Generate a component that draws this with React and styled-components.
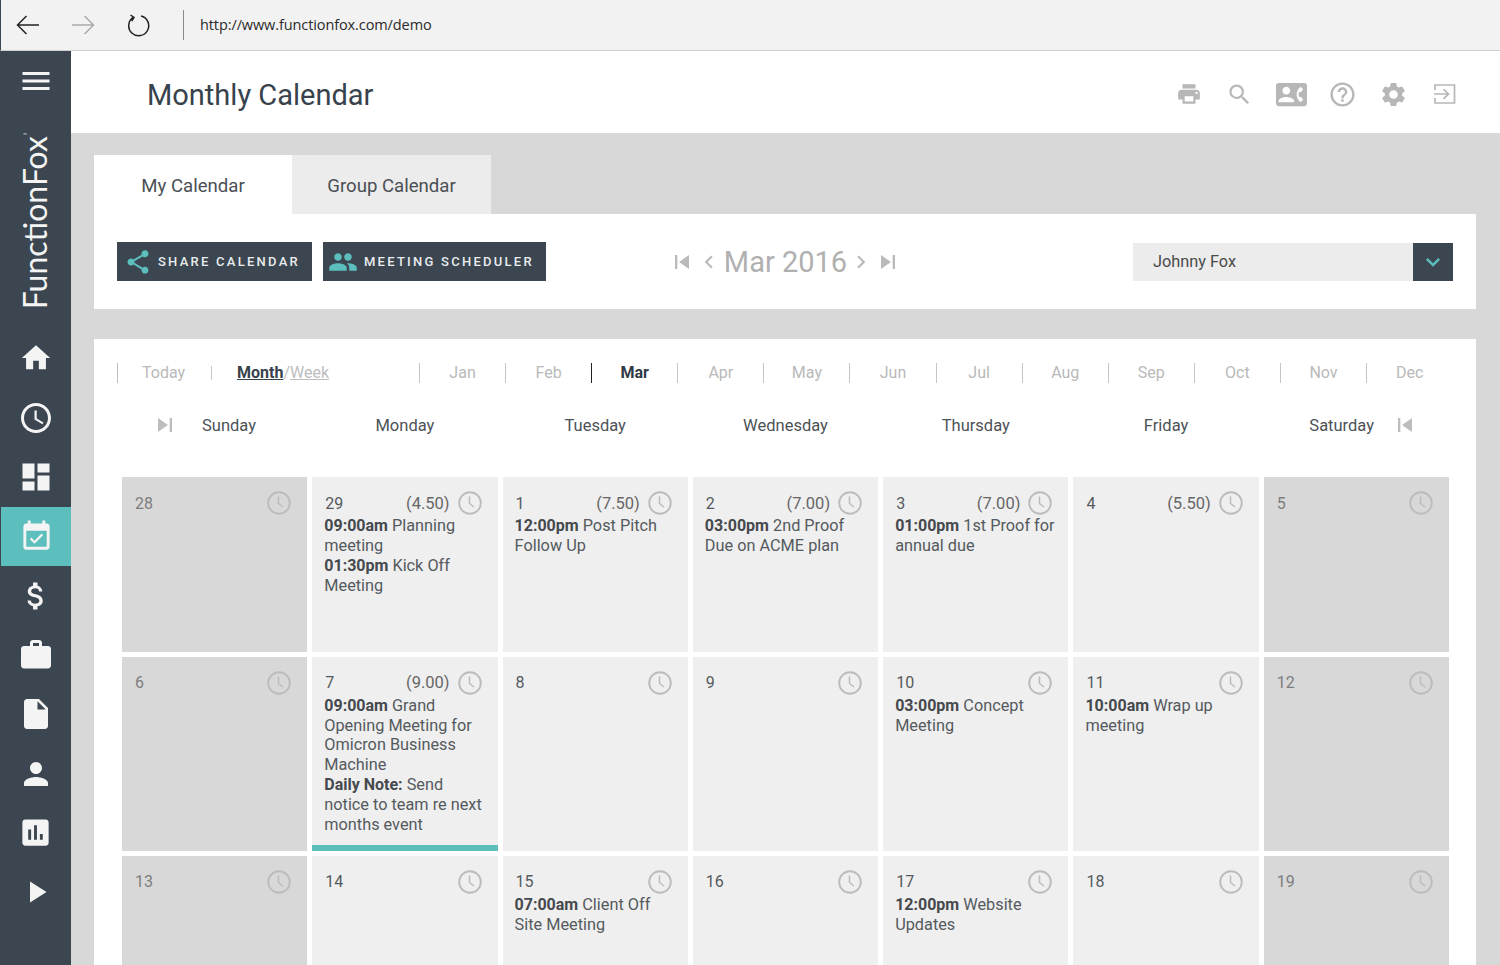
import React from "react";
import styled, { createGlobalStyle } from "styled-components";
import {
  MdAccessTime,
  MdAssessment,
  MdAttachMoney,
  MdChevronLeft,
  MdChevronRight,
  MdContactPhone,
  MdDashboard,
  MdEventAvailable,
  MdHelpOutline,
  MdHome,
  MdInsertDriveFile,
  MdKeyboardArrowDown,
  MdMenu,
  MdPeople,
  MdPerson,
  MdPlayArrow,
  MdPrint,
  MdSearch,
  MdSettings,
  MdShare,
  MdSkipNext,
  MdSkipPrevious,
  MdWork,
} from "react-icons/md";

const GlobalStyle = createGlobalStyle`
  html, body {
    margin: 0;
    padding: 0;
    height: 965px;
    overflow: hidden;
    background: #d8d8d8;
    font-family: Roboto, "Liberation Sans", sans-serif;
  }
  * { box-sizing: border-box; }
`;

const navItems = [
  { Icon: MdHome, size: 34 },
  { Icon: MdAccessTime, size: 36 },
  { Icon: MdDashboard, size: 36 },
  { Icon: MdEventAvailable, size: 35, active: true },
  { Icon: MdAttachMoney, size: 36 },
  { Icon: MdWork, size: 36 },
  { Icon: MdInsertDriveFile, size: 36 },
  { Icon: MdPerson, size: 36 },
  { Icon: MdAssessment, size: 35 },
  { Icon: MdPlayArrow, size: 36 },
];

const months = ["Jan", "Feb", "Mar", "Apr", "May", "Jun", "Jul", "Aug", "Sep", "Oct", "Nov", "Dec"];
const weekdays = ["Monday", "Tuesday", "Wednesday", "Thursday", "Friday"];

const days = [
  { n: 28, off: true },
  {
    n: 29,
    hours: "4.50",
    items: [
      ["09:00am", "Planning meeting"],
      ["01:30pm", "Kick Off Meeting"],
    ],
  },
  { n: 1, hours: "7.50", items: [["12:00pm", "Post Pitch Follow Up"]] },
  { n: 2, hours: "7.00", items: [["03:00pm", "2nd Proof Due on ACME plan"]] },
  { n: 3, hours: "7.00", items: [["01:00pm", "1st Proof for annual due"]] },
  { n: 4, hours: "5.50" },
  { n: 5, off: true },
  { n: 6, off: true },
  {
    n: 7,
    hours: "9.00",
    marked: true,
    items: [
      ["09:00am", "Grand Opening Meeting for Omicron Business Machine"],
      ["Daily Note:", "Send notice to team re next months event"],
    ],
  },
  { n: 8 },
  { n: 9 },
  { n: 10, items: [["03:00pm", "Concept Meeting"]] },
  { n: 11, items: [["10:00am", "Wrap up meeting"]] },
  { n: 12, off: true },
  { n: 13, off: true },
  { n: 14 },
  { n: 15, items: [["07:00am", "Client Off Site Meeting"]] },
  { n: 16 },
  { n: 17, items: [["12:00pm", "Website Updates"]] },
  { n: 18 },
  { n: 19, off: true },
];

const ClockIcon = () => (
  <svg width="24" height="24" viewBox="0 0 24 24" fill="none" stroke="#bcbcbc" strokeWidth="1.9">
    <circle cx="12" cy="12" r="10.8" />
    <path d="M11.5 5.5V12.5L16 16" strokeWidth="1.5" />
  </svg>
);

const LogoutIcon = () => (
  <svg width="22" height="20" viewBox="0 0 22 20" fill="none" stroke="#b7b7b7" strokeWidth="1.7">
    <path d="M1 6V1H20.5V19H1V14" />
    <path d="M0 10H14M9.5 5.2L14.5 10L9.5 14.8" />
  </svg>
);

const App = () => (
  <Page>
    <GlobalStyle />
    <BrowserBar>
      <BrowserBtn>
        <svg width="24" height="20" viewBox="0 0 24 20" fill="none" stroke="#222" strokeWidth="1.5">
          <path d="M23 10H1.5M10.5 1L1.5 10L10.5 19" />
        </svg>
      </BrowserBtn>
      <BrowserBtn>
        <svg width="24" height="20" viewBox="0 0 24 20" fill="none" stroke="#aaa" strokeWidth="1.5">
          <path d="M1 10H22.5M13.5 1L22.5 10L13.5 19" />
        </svg>
      </BrowserBtn>
      <BrowserBtn>
        <svg width="24" height="24" viewBox="0 0 24 24" fill="none" stroke="#222" strokeWidth="1.5">
          <path d="M7.5 4.2A10 10 0 1 0 15 3M4.5 2L8 4.4L5.8 8" />
        </svg>
      </BrowserBtn>
      <UrlDivider />
      <Url>http://www.functionfox.com/demo</Url>
    </BrowserBar>
    <Body>
      <Sidebar>
        <MenuBtn>
          <MdMenu size={36} />
        </MenuBtn>
        <Logo>
          <LogoText>
            FunctionFox<LogoMark>™</LogoMark>
          </LogoText>
        </Logo>
        <NavList>
          {navItems.map(({ Icon, size, active }, i) => (
            <NavItem key={i} $active={active}>
              <Icon size={size} />
            </NavItem>
          ))}
        </NavList>
      </Sidebar>
      <Main>
        <Header>
          <Title>Monthly Calendar</Title>
          <HeaderIcons>
            <HeaderIcon><MdPrint size={26} /></HeaderIcon>
            <HeaderIcon><MdSearch size={27} /></HeaderIcon>
            <HeaderIcon><MdContactPhone size={31} /></HeaderIcon>
            <HeaderIcon><MdHelpOutline size={29} /></HeaderIcon>
            <HeaderIcon><MdSettings size={29} /></HeaderIcon>
            <HeaderIcon><LogoutIcon /></HeaderIcon>
          </HeaderIcons>
        </Header>
        <Content>
          <Tabs>
            <Tab $active>My Calendar</Tab>
            <Tab>Group Calendar</Tab>
          </Tabs>
          <Toolbar>
            <ButtonGroup>
              <ActionButton $width={195} $pad={7}>
                <MdShare size={28} />
                SHARE CALENDAR
              </ActionButton>
              <ActionButton $width={223} $pad={5}>
                <MdPeople size={30} />
                MEETING SCHEDULER
              </ActionButton>
            </ButtonGroup>
            <MonthPager>
              <MdSkipPrevious size={28} />
              <MdChevronLeft size={26} />
              <PagerLabel>Mar 2016</PagerLabel>
              <MdChevronRight size={26} />
              <MdSkipNext size={28} />
            </MonthPager>
            <UserSelect>
              <UserName>Johnny Fox</UserName>
              <SelectArrow>
                <MdKeyboardArrowDown size={28} />
              </SelectArrow>
            </UserSelect>
          </Toolbar>
          <CalendarPanel>
            <MonthBar>
              <TodayCell>Today</TodayCell>
              <ViewCell>
                <ViewLink $current>Month</ViewLink>
                <ViewSlash>/</ViewSlash>
                <ViewLink>Week</ViewLink>
              </ViewCell>
              {months.map((m) => (
                <MonthCell key={m} $current={m === "Mar"}>
                  {m}
                </MonthCell>
              ))}
            </MonthBar>
            <WeekRow>
              <WeekEdge>
                <MdSkipNext size={28} />
                Sunday
              </WeekEdge>
              {weekdays.map((d) => (
                <WeekDay key={d}>{d}</WeekDay>
              ))}
              <WeekEdge $end>
                Saturday
                <MdSkipPrevious size={28} />
              </WeekEdge>
            </WeekRow>
            <DayGrid>
              {days.map((d) => (
                <DayCell key={d.n} $off={d.off} $marked={d.marked}>
                  <DayHead>
                    <DayNumber $off={d.off}>{d.n}</DayNumber>
                    {d.hours && <DayHours>({d.hours})</DayHours>}
                    <ClockIcon />
                  </DayHead>
                  {d.items &&
                    d.items.map(([time, text]) => (
                      <DayItem key={time}>
                        <strong>{time}</strong> {text}
                      </DayItem>
                    ))}
                </DayCell>
              ))}
            </DayGrid>
          </CalendarPanel>
        </Content>
      </Main>
    </Body>
  </Page>
);

const Page = styled.div`
  width: 1500px;
  height: 965px;
  overflow: hidden;
  display: flex;
  flex-direction: column;
`;

const BrowserBar = styled.div`
  height: 51px;
  flex: none;
  display: flex;
  align-items: center;
  padding-left: 15px;
  background: #f2f2f2;
  border-left: 1px solid #3b4651;
  border-bottom: 1px solid #cfcfcf;
`;

const BrowserBtn = styled.div`
  width: 24px;
  height: 24px;
  margin-right: 31px;
  display: flex;
  align-items: center;
  justify-content: center;
`;

const UrlDivider = styled.div`
  width: 1px;
  height: 30px;
  margin-left: 2px;
  background: #8a8a8a;
`;

const Url = styled.div`
  margin: -1px 0 0 16px;
  font-family: "Open Sans", sans-serif;
  font-size: 14.5px;
  letter-spacing: -0.1px;
  color: #2a2a2a;
`;

const Body = styled.div`
  flex: 1;
  display: flex;
  min-height: 0;
`;

const Sidebar = styled.aside`
  width: 71px;
  flex: none;
  background: #3b4651;
  display: flex;
  flex-direction: column;
`;

const MenuBtn = styled.div`
  height: 59px;
  display: flex;
  align-items: center;
  justify-content: center;
  color: #f4f4f4;
`;

const Logo = styled.div`
  height: 218.5px;
  padding-right: 2px;
  display: flex;
  align-items: center;
  justify-content: center;
`;

const LogoText = styled.div`
  writing-mode: vertical-rl;
  transform: rotate(180deg);
  font-family: Lato, sans-serif;
  font-weight: 400;
  font-size: 32px;
  white-space: nowrap;
  color: #f4f4f4;
`;

const LogoMark = styled.span`
  font-size: 5px;
  vertical-align: 10px;
`;

const NavList = styled.nav`
  display: grid;
  grid-auto-rows: 59.35px;
`;

const NavItem = styled.div`
  display: flex;
  align-items: center;
  justify-content: center;
  margin-left: ${({ $active }) => ($active ? "1px" : "0")};
  color: #f4f4f4;
  background: ${({ $active }) => ($active ? "#5cbfbd" : "transparent")};
`;

const Main = styled.main`
  flex: 1;
  min-width: 0;
  display: flex;
  flex-direction: column;
`;

const Header = styled.header`
  height: 82px;
  flex: none;
  background: #fff;
  display: flex;
  align-items: center;
  justify-content: space-between;
  padding: 4px 35px 0 76px;
`;

const Title = styled.h1`
  margin: 2px 0 0;
  font-size: 29px;
  font-weight: 400;
  color: #37424c;
`;

const HeaderIcons = styled.div`
  display: flex;
  gap: 11.3px;
`;

const HeaderIcon = styled.div`
  width: 40px;
  height: 40px;
  display: flex;
  align-items: center;
  justify-content: center;
  color: #b7b7b7;
`;

const Content = styled.div`
  flex: 1;
  min-height: 0;
  padding: 22px 24px 0 23px;
  background: #d8d8d8;
`;

const Tabs = styled.div`
  display: flex;
`;

const Tab = styled.div`
  height: 59px;
  width: ${({ $active }) => ($active ? "198px" : "199px")};
  padding-top: 2px;
  display: flex;
  align-items: center;
  justify-content: center;
  font-size: 18.6px;
  color: #4a4f54;
  background: ${({ $active }) => ($active ? "#fff" : "#ececec")};
`;

const Toolbar = styled.section`
  height: 95px;
  padding: 0 23px;
  background: #fff;
  display: grid;
  grid-template-columns: 1fr auto 1fr;
  align-items: center;
`;

const ButtonGroup = styled.div`
  display: flex;
  gap: 11px;
`;

const ActionButton = styled.div`
  width: ${({ $width }) => $width}px;
  height: 39px;
  padding-left: ${({ $pad }) => $pad}px;
  display: flex;
  align-items: center;
  gap: 6px;
  background: #3b4651;
  color: #e9eced;
  font-size: 13px;
  font-weight: 500;
  letter-spacing: 2.25px;
  white-space: nowrap;

  svg {
    color: #5cbfbd;
  }
`;

const MonthPager = styled.div`
  display: flex;
  align-items: center;
  color: #bababa;
`;

const PagerLabel = styled.div`
  font-size: 29px;
  margin: 0 1px 0 2px;
  color: #b0b0b0;
`;

const UserSelect = styled.div`
  justify-self: end;
  width: 320px;
  height: 38px;
  display: flex;
  background: #ececec;
`;

const UserName = styled.div`
  flex: 1;
  padding-left: 20px;
  line-height: 38px;
  font-size: 16.3px;
  color: #4a4a4a;
`;

const SelectArrow = styled.div`
  width: 40px;
  display: flex;
  align-items: center;
  justify-content: center;
  background: #3b4651;
  color: #5cbfbd;
`;

const CalendarPanel = styled.section`
  margin-top: 30px;
  height: 700px;
  padding: 0 27px 0 28px;
  background: #fff;
`;

const MonthBar = styled.div`
  height: 67px;
  margin-left: -5px;
  display: flex;
  align-items: center;
  font-size: 16px;
  color: #b9b9b9;
`;

const TodayCell = styled.div`
  width: 94px;
  height: 20px;
  flex: none;
  padding-left: 24px;
  line-height: 20px;
  border-left: 1px solid #bdbdbd;
`;

const ViewCell = styled.div`
  width: 208px;
  height: 14px;
  flex: none;
  padding-left: 25px;
  line-height: 14px;
  border-left: 1px solid #c9c9c9;
`;

const ViewLink = styled.span`
  text-decoration: underline;
  font-weight: ${({ $current }) => ($current ? 700 : 400)};
  color: ${({ $current }) => ($current ? "#37424c" : "#bdbdbd")};
`;

const ViewSlash = styled.span`
  color: #bdbdbd;
`;

const MonthCell = styled.div`
  width: 86.1px;
  height: 20px;
  flex: none;
  line-height: 20px;
  text-align: center;
  border-left: 1px solid ${({ $current }) => ($current ? "#222" : "#c4c4c4")};
  font-weight: ${({ $current }) => ($current ? 700 : 400)};
  color: ${({ $current }) => ($current ? "#2f3a44" : "#b9b9b9")};
`;

const WeekRow = styled.div`
  height: 71.49px;
  display: grid;
  grid-template-columns: repeat(7, 1fr);
  gap: 0 5px;
  font-size: 16.5px;
  color: #4c5257;
  padding-bottom: 33px;
`;

const WeekDay = styled.div`
  display: flex;
  align-items: center;
  justify-content: center;
`;

const WeekEdge = styled.div`
  display: flex;
  align-items: center;
  justify-content: ${({ $end }) => ($end ? "flex-end" : "flex-start")};
  gap: ${({ $end }) => ($end ? "17px" : "23px")};
  padding: 0 30px 0 29px;

  svg {
    color: #bdbdbd;
    flex: none;
  }
`;

const DayGrid = styled.div`
  display: grid;
  grid-template-columns: repeat(7, 1fr);
  grid-template-rows: 174.31px 194px 175px;
  gap: 5px;
`;

const DayCell = styled.div`
  padding: 13px 12px 0 12px;
  background: ${({ $off }) => ($off ? "#d8d8d8" : "#efefef")};
  border-bottom: ${({ $marked }) => ($marked ? "6px solid #5cbfbd" : "none")};
  font-size: 16px;
  line-height: 19.8px;
  color: #555a5e;
`;

const DayHead = styled.div`
  height: 26px;
  margin-right: 4px;
  display: flex;
  align-items: center;
  gap: 8px;
`;

const DayNumber = styled.div`
  flex: 1;
  padding-left: 1px;
  color: ${({ $off }) => ($off ? "#7d7d7d" : "#555a5e")};
`;

const DayHours = styled.div`
  font-size: 16.5px;
  color: #666;
`;

const DayItem = styled.div`
  font-size: 16.3px;

  strong {
    font-size: 16px;
    font-weight: 700;
    color: #45494d;
  }
`;

export default App;
